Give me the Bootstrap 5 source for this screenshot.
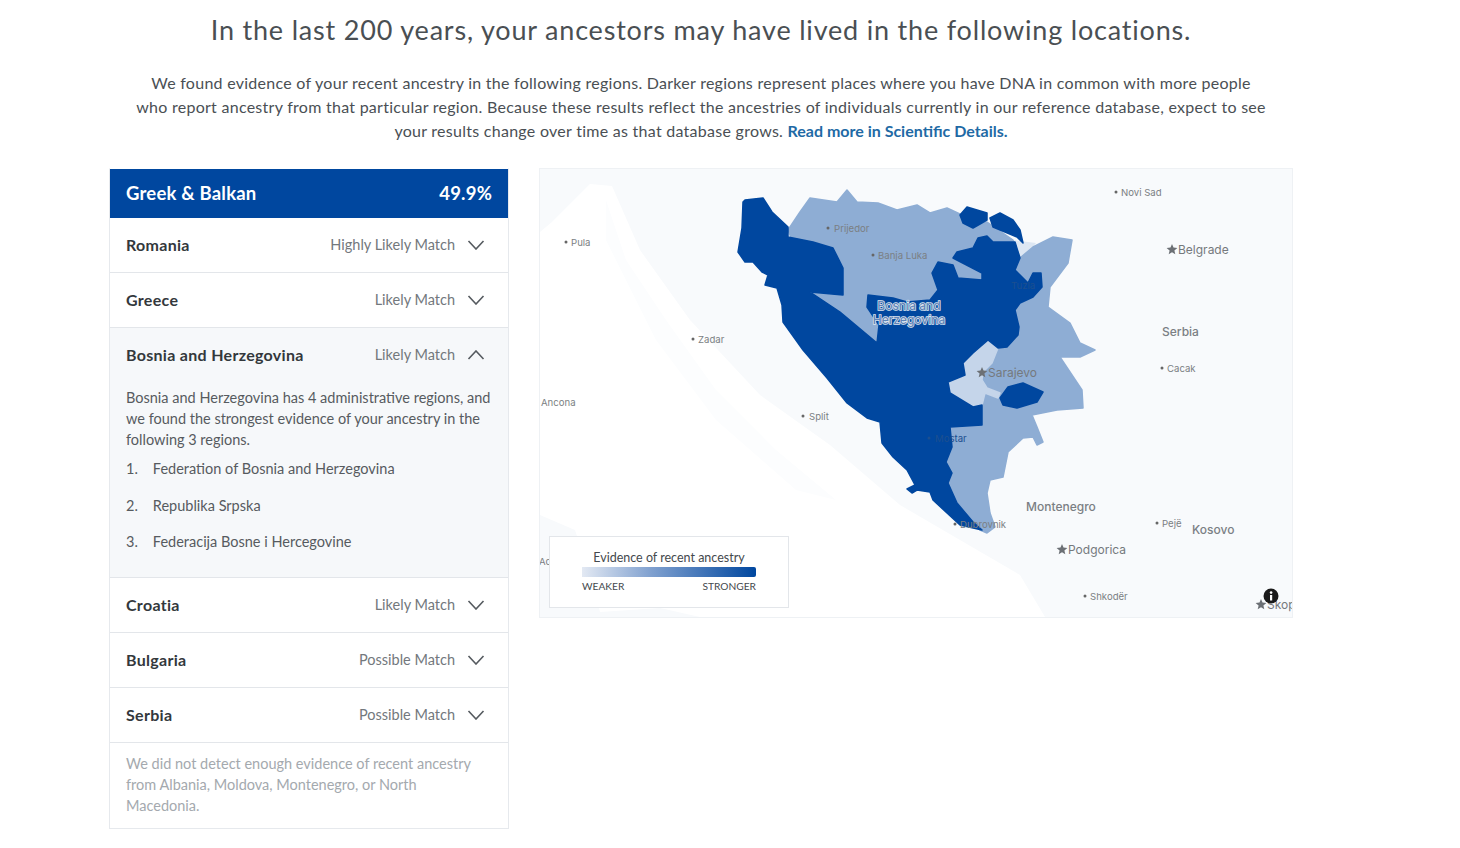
<!DOCTYPE html>
<html lang="en">
<head>
<meta charset="utf-8">
<title>Recent ancestor locations</title>
<link href="https://cdn.jsdelivr.net/npm/bootstrap@5.3.0/dist/css/bootstrap.min.css" rel="stylesheet">
<style>
body{font-family:Lato,"Liberation Sans",sans-serif;color:#3a3f44;background:#fff;overflow:hidden}
.page-wrap{width:1184px;margin-left:109px}
.page-title{font-family:Lato,sans-serif;font-size:27px;font-weight:400;letter-spacing:.81px;line-height:34px;color:#4a4f53;margin:13px 0 0;text-align:center}
.page-intro{width:1160px;margin:24px auto 25px;font-size:16px;letter-spacing:.27px;line-height:24px;text-align:center;color:#4a4f54;margin-left:12px}
.page-intro a{color:#1f6aa5;font-weight:700;text-decoration:none;letter-spacing:0}
.main-row{gap:30px}
.panel{width:400px;flex:none;border:1px solid #e6e9ed;border-top-color:transparent}
.panel-head{height:49px;padding:0 16px 0 16px;background:#00479f;color:#fff;font-size:18.5px;font-weight:700;letter-spacing:.2px}
.region-row{height:55px;padding:0 16px;border-bottom:1px solid #e3e6ea;background:#fff}
.region-name{font-size:16px;font-weight:700;color:#33383c;letter-spacing:.3px}
.region-match{font-size:14.5px;color:#73787d;margin-right:12px}
.chev{width:18px;height:10px;margin-right:7px;flex:none}
.region-open{background:#f6f8fa;border-bottom:1px solid #e3e6ea}
.region-open .region-row{background:none;border:0;height:53px}
.region-body{padding:6px 16px 10px;font-size:14.5px;line-height:21px;color:#565b60;height:196px}
.region-body p{margin:0 0 8px}
.region-body ol{margin:0;padding:0;list-style:none}
.region-body li{display:flex;gap:15px;height:36.5px}
.panel-note{padding:10px 16px 0;height:85px;font-size:14.5px;line-height:21px;color:#a4a9ae}
.map-box{position:relative;width:754px;height:450px;flex:none;border:1px solid #eef1f4;overflow:hidden;background:#f8fafc}
.map-art{display:block;width:100%;height:100%}
.map-art text{font-family:Inter,Lato,sans-serif;fill:#7b7f83;font-size:9.6px}
.map-art .shape{stroke-width:1.5px;stroke-linejoin:round}
.map-art .country{font-size:12px;font-weight:500;fill:#7b7f84}
.map-art .capital{font-size:12px;fill:#75797d}
.map-art .sunk{fill:#1c4f90}
.map-art .halo{font-size:12px;font-weight:500;fill:#5f85b8;stroke:#dfe6f0;stroke-width:1.4px;paint-order:stroke}
.map-legend{position:absolute;left:9px;top:367px;width:240px;height:72px;background:#fff;border:1px solid #e3e6ea;padding:13px 32px 0;font-size:12.5px;line-height:16px;color:#44494d}
.legend-ramp{height:10px;border-radius:0 2px 2px 0;background:linear-gradient(90deg,#e3e9f3,#7fa0cf 40%,#00479f);margin-top:1px}
.legend-ends{font-size:10.2px;line-height:14px;margin-top:2px}
</style>
</head>
<body>
<div class="page-wrap">
<h1 class="page-title">In the last 200 years, your ancestors may have lived in the following locations.</h1>
<p class="page-intro">We found evidence of your recent ancestry in the following regions. Darker regions represent places where you have DNA in common with more people<br>who report ancestry from that particular region. Because these results reflect the ancestries of individuals currently in our reference database, expect to see<br>your results change over time as that database grows. <a href="#">Read more in Scientific Details.</a></p>
<div class="d-flex align-items-start main-row">
<section class="panel">
<div class="panel-head d-flex align-items-center justify-content-between"><span>Greek &amp; Balkan</span><span>49.9%</span></div>
<div class="region-row d-flex align-items-center"><span class="region-name me-auto">Romania</span><span class="region-match">Highly Likely Match</span><svg class="chev" viewBox="0 0 18 10"><path d="M1.5 1l7.5 8 7.5-8" fill="none" stroke="#555a5f" stroke-width="1.6"/></svg></div>
<div class="region-row d-flex align-items-center"><span class="region-name me-auto">Greece</span><span class="region-match">Likely Match</span><svg class="chev" viewBox="0 0 18 10"><path d="M1.5 1l7.5 8 7.5-8" fill="none" stroke="#555a5f" stroke-width="1.6"/></svg></div>
<div class="region-open">
<div class="region-row d-flex align-items-center"><span class="region-name me-auto">Bosnia and Herzegovina</span><span class="region-match">Likely Match</span><svg class="chev" viewBox="0 0 18 10"><path d="M1.5 9l7.5-8 7.5 8" fill="none" stroke="#555a5f" stroke-width="1.6"/></svg></div>
<div class="region-body">
<p>Bosnia and Herzegovina has 4 administrative regions, and we found the strongest evidence of your ancestry in the following 3 regions.</p>
<ol><li><span>1.</span><span>Federation of Bosnia and Herzegovina</span></li><li><span>2.</span><span>Republika Srpska</span></li><li><span>3.</span><span>Federacija Bosne i Hercegovine</span></li></ol>
</div>
</div>
<div class="region-row d-flex align-items-center"><span class="region-name me-auto">Croatia</span><span class="region-match">Likely Match</span><svg class="chev" viewBox="0 0 18 10"><path d="M1.5 1l7.5 8 7.5-8" fill="none" stroke="#555a5f" stroke-width="1.6"/></svg></div>
<div class="region-row d-flex align-items-center"><span class="region-name me-auto">Bulgaria</span><span class="region-match">Possible Match</span><svg class="chev" viewBox="0 0 18 10"><path d="M1.5 1l7.5 8 7.5-8" fill="none" stroke="#555a5f" stroke-width="1.6"/></svg></div>
<div class="region-row d-flex align-items-center"><span class="region-name me-auto">Serbia</span><span class="region-match">Possible Match</span><svg class="chev" viewBox="0 0 18 10"><path d="M1.5 1l7.5 8 7.5-8" fill="none" stroke="#555a5f" stroke-width="1.6"/></svg></div>
<div class="panel-note">We did not detect enough evidence of recent ancestry from Albania, Moldova, Montenegro, or North Macedonia.</div>
</section>
<div class="map-box">
<svg class="map-art" viewBox="540 169 752 448" xmlns="http://www.w3.org/2000/svg">
<path fill="#fff" d="M540 232L552 222 590 184 612 186 640 250 690 320 760 395 830 445 900 505 960 540 1020 575 1045 617H700L660 608 600 612 585 560 575 530 540 515Z"/>
<path fill="#fcfdfe" d="M606 200l20 60 40 60 50 70 60 60 60 50-40-10-80-70-60-80-50-100z"/>
<path fill="#dde7f3" d="M1013 240L1036 243 1015 268Z"/>
<path class="shape" fill="#8eadd4" stroke="#8eadd4" d="M788 230L800 212 810 198 837 202 847 190 857 202 878 203 897 210 917 205 930 213 947 208 962 215 973 227 987 222 1013 240 1020 258 1033 247 1053 237 1072 240 1068 263 1050 287 1048 307 1070 323 1080 343 1095 350 1080 357 1060 357 1082 390 1083 408 1057 410 1032 415 1037 427 1043 442 1037 445 1033 437 1023 438 1008 452 1003 477 990 480 987 493 990 513 995 527 987 533 980 530 940 480 930 420 960 350 880 350 810 293 800 260Z"/>
<path class="shape" fill="#c5d5ea" stroke="#c5d5ea" d="M988 340L998 348 992 363 983 372 982 380 987 388 1000 393 998 398 985 393 982 405 973 407 950 393 948 382 965 375 963 363 973 353Z"/>
<path class="shape" fill="#00479f" stroke="#00479f" d="M745 200L763 198 772 212 788 227 788 237 813 242 833 248 843 268 843 295 810 292 840 312 877 343 879 325 867 307 868 295 893 298 907 302 930 300 938 290 932 273 938 262 953 265 958 278 982 280 982 273 953 258 957 252 973 248 978 238 987 236 993 242 1015 242 1020 258 1015 270 1028 283 1033 273 1041 273 1042 287 1033 297 1020 303 1015 310 1019 327 1018 335 1007 347 998 348 988 340 973 353 963 363 965 375 948 382 950 393 973 407 982 405 982 425 950 427 952 447 946 462 952 473 948 483 957 503 973 522 982 530 960 525 933 500 930 492 917 490 912 493 907 489 915 485 907 470 893 457 882 443 880 422 867 418 847 403 827 378 803 350 783 322 782 305 777 288 765 285 768 275 762 272 753 262 745 262 738 252 742 228 743 202Z"/>
<path class="shape" fill="#00479f" stroke="#00479f" d="M1000 398L1008 387 1023 383 1043 392 1037 402 1017 408 1003 405Z"/>
<path class="shape" fill="#00479f" stroke="#00479f" d="M960 215L967 207 987 213 987 220 973 228 963 223Z"/>
<path class="shape" fill="#00479f" stroke="#00479f" d="M990 218L1000 213 1013 220 1020 230 1023 243 1017 237 993 227Z"/>
<g>
<circle cx="1116" cy="192" r="1.5" fill="#666"/><text x="1121" y="196">Novi Sad</text>
<circle cx="566" cy="242" r="1.5" fill="#666"/><text x="571" y="246">Pula</text>
<circle cx="828" cy="228" r="1.5" fill="#666"/><text x="834" y="232">Prijedor</text>
<circle cx="873" cy="255" r="1.5" fill="#666"/><text x="878" y="259">Banja Luka</text>
<circle cx="693" cy="339" r="1.5" fill="#666"/><text x="698" y="343">Zadar</text>
<text x="541" y="406">Ancona</text>
<circle cx="803" cy="416" r="1.5" fill="#666"/><text x="809" y="420">Split</text>
<circle cx="1162" cy="368" r="1.5" fill="#666"/><text x="1167" y="372">Cacak</text>
<circle cx="1157" cy="523" r="1.5" fill="#666"/><text x="1162" y="527">Pejë</text>
<circle cx="1085" cy="596" r="1.5" fill="#666"/><text x="1090" y="600">Shkodër</text>
<circle cx="955" cy="524" r="1.5" fill="#666"/><text x="960" y="528">Dubrovnik</text>
<circle cx="929" cy="438" r="1.5" fill="#1c4f90"/><text class="sunk" x="935" y="442">Mostar</text>
<text class="sunk" x="1011" y="289">Tuzla</text>
<text x="539" y="565">Ac</text>
<text class="country" x="1162" y="336">Serbia</text>
<text class="country" x="1026" y="511">Montenegro</text>
<text class="country" x="1192" y="534">Kosovo</text>
<text class="capital" x="1178" y="254">Belgrade</text>
<text class="capital" x="988" y="377">Sarajevo</text>
<text class="capital" x="1068" y="554">Podgorica</text>
<text class="capital" x="1267" y="609">Skopje</text>
<g fill="#6c7075"><path d="M1172 244l1.5 3.6 3.9.3-3 2.5.9 3.8-3.3-2-3.3 2 .9-3.8-3-2.5 3.9-.3z"/>
<path d="M982 367l1.5 3.6 3.9.3-3 2.5.9 3.8-3.3-2-3.3 2 .9-3.8-3-2.5 3.9-.3z"/>
<path d="M1062 544l1.5 3.6 3.9.3-3 2.5.9 3.8-3.3-2-3.3 2 .9-3.8-3-2.5 3.9-.3z"/>
<path d="M1261 599l1.5 3.6 3.9.3-3 2.5.9 3.8-3.3-2-3.3 2 .9-3.8-3-2.5 3.9-.3z"/></g>
<text class="halo" x="909" y="310" text-anchor="middle">Bosnia and</text>
<text class="halo" x="909" y="324" text-anchor="middle">Herzegovina</text>
<circle cx="1271" cy="596" r="7.5" fill="#1a1a1a"/>
<rect x="1270" y="595" width="2.2" height="5.5" fill="#fff"/><circle cx="1271.1" cy="592.6" r="1.3" fill="#fff"/>
</g>
</svg>
<div class="map-legend">
<div class="text-center">Evidence of recent ancestry</div>
<div class="legend-ramp"></div>
<div class="legend-ends d-flex justify-content-between"><span>WEAKER</span><span>STRONGER</span></div>
</div>
</div>
</div>
</div>
</body>
</html>
